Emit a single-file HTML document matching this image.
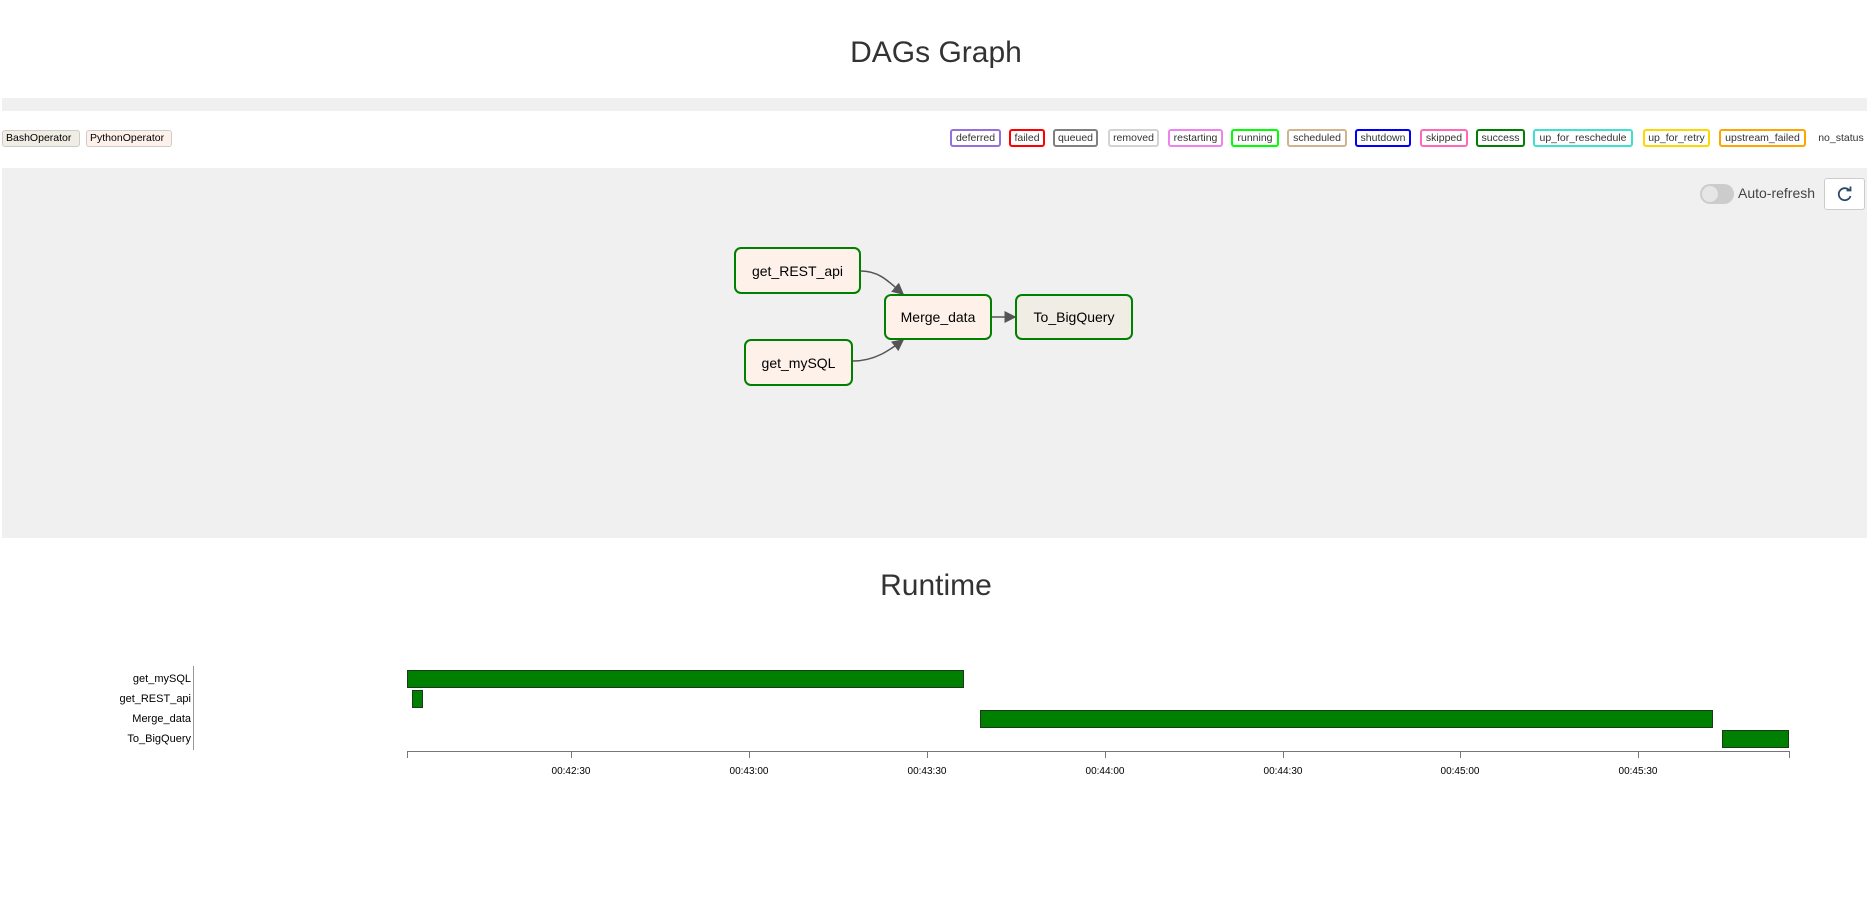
<!DOCTYPE html>
<html><head><meta charset="utf-8"><style>
body{margin:0;width:1872px;height:911px;background:#fff;font-family:"Liberation Sans",sans-serif;position:relative;overflow:hidden}
.a{position:absolute}
h1{position:absolute;margin:0;left:0;width:1872px;text-align:center;font-weight:normal;font-size:30px;color:#333}
.op{position:absolute;top:130px;border:1px solid #ccc;border-radius:3px;font-size:10.5px;line-height:15px;padding:0 3px;box-sizing:border-box;height:17px}
.lg{position:absolute;top:129px;height:18px;border:2px solid;border-radius:3px;font-size:10.5px;line-height:14px;text-align:center;box-sizing:border-box;color:#333;background:#fff}
.node{position:absolute;border:2.5px solid #008000;border-radius:7px;background:#fdf1ea;box-sizing:border-box;font-size:14px;display:flex;align-items:center;justify-content:center;color:#000}
.lbl{position:absolute;right:1681px;font-size:11px;color:#000;text-align:right}
.bar{position:absolute;background:#008000;border:1px solid #1a3a1a;box-sizing:border-box}
.tk{position:absolute;top:766px;font-size:10px;width:60px;margin-left:-30px;text-align:center}
</style></head><body>
<h1 style="top:36px">DAGs Graph</h1>
<div class="a" style="left:2px;top:98px;width:1865px;height:13px;background:#f0f0f0"></div>
<div class="op" style="left:2px;width:78px;background:#f0ede4">BashOperator</div>
<div class="op" style="left:86px;width:86px;background:#fdf1ea">PythonOperator</div>
<div class="lg" style="left:950px;width:51px;border-color:mediumpurple">deferred</div>
<div class="lg" style="left:1009px;width:36px;border-color:red">failed</div>
<div class="lg" style="left:1053px;width:45px;border-color:gray">queued</div>
<div class="lg" style="left:1108px;width:51px;border-color:lightgrey">removed</div>
<div class="lg" style="left:1168px;width:55px;border-color:violet">restarting</div>
<div class="lg" style="left:1231px;width:48px;border-color:lime">running</div>
<div class="lg" style="left:1287px;width:60px;border-color:tan">scheduled</div>
<div class="lg" style="left:1355px;width:56px;border-color:blue">shutdown</div>
<div class="lg" style="left:1420px;width:48px;border-color:hotpink">skipped</div>
<div class="lg" style="left:1476px;width:49px;border-color:green">success</div>
<div class="lg" style="left:1533px;width:100px;border-color:turquoise">up_for_reschedule</div>
<div class="lg" style="left:1643px;width:67px;border-color:gold">up_for_retry</div>
<div class="lg" style="left:1719px;width:87px;border-color:orange">upstream_failed</div>
<div class="lg" style="left:1815px;width:52px;border-color:transparent">no_status</div>
<div class="a" style="left:2px;top:168px;width:1865px;height:370px;background:#f0f0f0"></div>
<div class="a" style="left:1700px;top:184px;width:34px;height:20px;border-radius:10px;background:#ccc"></div>
<div class="a" style="left:1702px;top:186px;width:16px;height:16px;border-radius:8px;background:#e6e6e6"></div>
<div class="a" style="left:1738px;top:185px;font-size:14px;color:#444">Auto-refresh</div>
<div class="a" style="left:1824px;top:178px;width:41px;height:32px;background:#fff;border:1px solid #ccc;border-radius:3px;box-sizing:border-box"></div>
<svg class="a" style="left:1836px;top:185px" width="18" height="18" viewBox="0 0 18 18"><path d="M13.5 5.5A6 6 0 1 0 14.5 11" fill="none" stroke="#2a4a6a" stroke-width="1.8"/><path d="M10.5 5.5h4v-4" fill="none" stroke="#2a4a6a" stroke-width="1.8"/></svg>
<svg class="a" style="left:0;top:0" width="1872" height="911">
<defs><marker id="m" markerWidth="8" markerHeight="8" refX="7" refY="4" orient="auto"><path d="M0 0L8 4L0 8z" fill="#555"/></marker></defs>
<path d="M861 271C880 271 890 283 903 294" fill="none" stroke="#555" stroke-width="1.5" marker-end="url(#m)"/>
<path d="M853 361C875 361 890 350 903 340" fill="none" stroke="#555" stroke-width="1.5" marker-end="url(#m)"/>
<path d="M992 317L1015 317" fill="none" stroke="#555" stroke-width="1.5" marker-end="url(#m)"/>
<line x1="193.5" y1="666" x2="193.5" y2="750" stroke="#999"/>
<line x1="407.5" y1="751.5" x2="1789.5" y2="751.5" stroke="#777"/>
<g stroke="#777"><line x1="407.5" y1="751" x2="407.5" y2="758"/><line x1="571.5" y1="751" x2="571.5" y2="758"/><line x1="749.5" y1="751" x2="749.5" y2="758"/><line x1="927.5" y1="751" x2="927.5" y2="758"/><line x1="1105.5" y1="751" x2="1105.5" y2="758"/><line x1="1283.5" y1="751" x2="1283.5" y2="758"/><line x1="1460.5" y1="751" x2="1460.5" y2="758"/><line x1="1638.5" y1="751" x2="1638.5" y2="758"/><line x1="1789.5" y1="751" x2="1789.5" y2="758"/></g>
</svg>
<div class="node" style="left:734px;top:247px;width:127px;height:47px">get_REST_api</div>
<div class="node" style="left:744px;top:339px;width:109px;height:47px">get_mySQL</div>
<div class="node" style="left:884px;top:294px;width:108px;height:46px">Merge_data</div>
<div class="node" style="left:1015px;top:294px;width:118px;height:46px;background:#f0ede4">To_BigQuery</div>
<h1 style="top:569px">Runtime</h1>
<div class="lbl" style="top:673px">get_mySQL</div>
<div class="lbl" style="top:693px">get_REST_api</div>
<div class="lbl" style="top:713px">Merge_data</div>
<div class="lbl" style="top:733px">To_BigQuery</div>
<div class="bar" style="left:407px;top:670px;width:557px;height:18px"></div>
<div class="bar" style="left:412px;top:690px;width:11px;height:18px"></div>
<div class="bar" style="left:980px;top:710px;width:733px;height:18px"></div>
<div class="bar" style="left:1722px;top:730px;width:67px;height:18px"></div>
<div class="tk" style="left:571px">00:42:30</div>
<div class="tk" style="left:749px">00:43:00</div>
<div class="tk" style="left:927px">00:43:30</div>
<div class="tk" style="left:1105px">00:44:00</div>
<div class="tk" style="left:1283px">00:44:30</div>
<div class="tk" style="left:1460px">00:45:00</div>
<div class="tk" style="left:1638px">00:45:30</div>
</body></html>
